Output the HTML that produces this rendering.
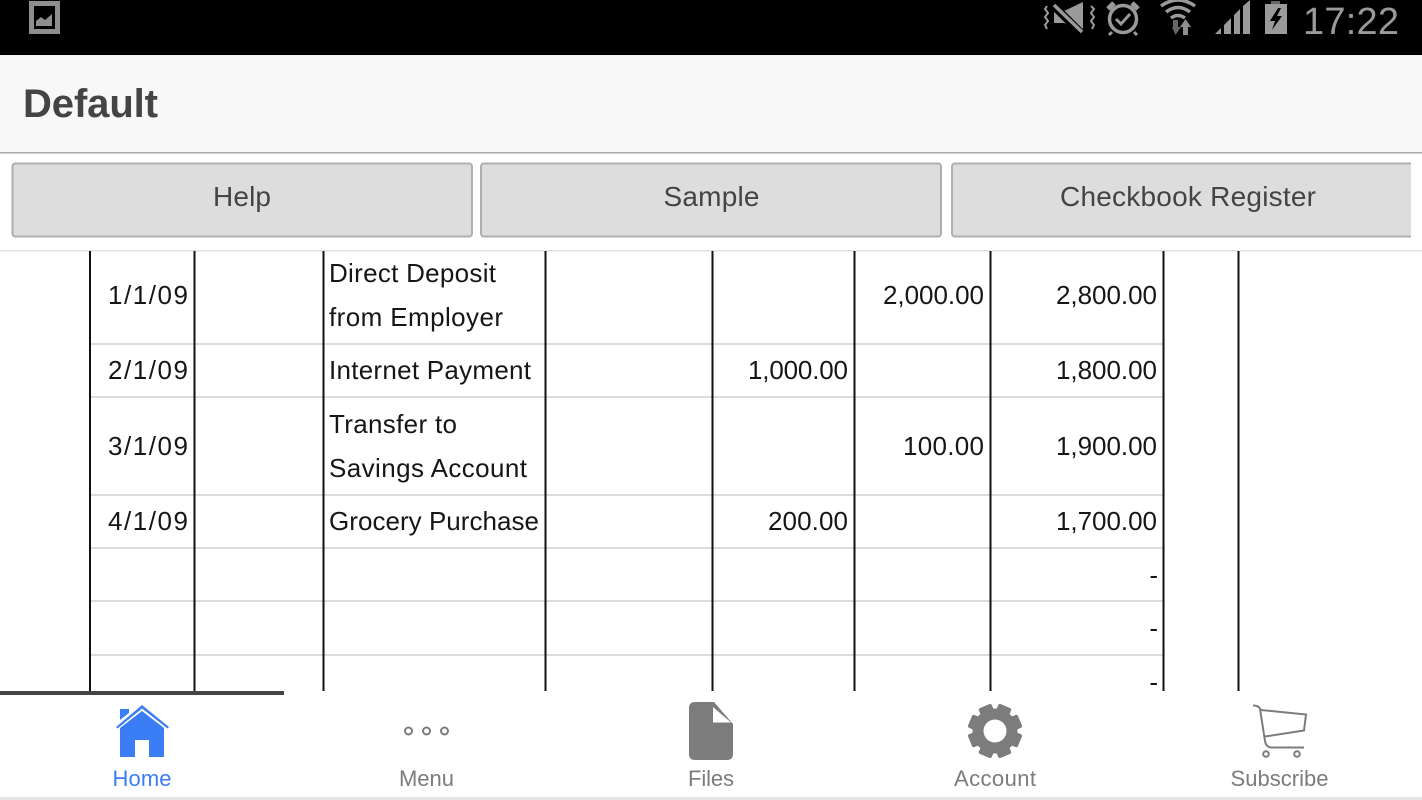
<!DOCTYPE html>
<html><head><meta charset="utf-8"><style>
html,body{margin:0;padding:0;background:#fff;width:1422px;height:800px;overflow:hidden}
svg{display:block;position:absolute;left:0;top:0}
text{font-family:"Liberation Sans",sans-serif}
.t{font-size:26px;fill:#161616}
.r{text-anchor:end}
.b{font-size:28px;fill:#444;text-anchor:middle}
.n{font-size:22px;fill:#7c7c7c;text-anchor:middle}
</style></head><body>
<svg width="1422" height="800" viewBox="0 0 1422 800" xmlns="http://www.w3.org/2000/svg">
<rect width="1422" height="800" fill="#fff"/>
<!-- status bar -->
<rect width="1422" height="55" fill="#000"/>
<g fill="#8e8e8e" stroke="none">
<path fill-rule="evenodd" d="M29 1H60V34H29ZM34 6V29H55V6Z"/>
<path d="M36 26V21L41 17L45 20L52 14V26Z"/>
</g>
<!-- mute + vibrate -->
<path d="M1054 11H1064L1083 2V31L1064 23H1054Z" fill="#9a9a9a"/>
<path d="M1053 5L1083 35" stroke="#000" stroke-width="8" fill="none"/>
<path d="M1054 5L1082 32" stroke="#9a9a9a" stroke-width="3.500" fill="none"/>
<g stroke="#9a9a9a" fill="none">
<path d="M1047 6L1045 9L1048 13L1045 17L1048 21L1045 25L1047 29" stroke-width="2"/>
<path d="M1091 6L1094 9L1091 13L1094 17L1091 21L1094 25L1092 29" stroke-width="2"/>
<circle cx="1123" cy="19" r="13.500" stroke-width="3.500"/>
<path d="M1116 19L1121 24L1130 14" stroke-width="3"/>
<path d="M1108 9L1114 3M1138 9L1132 3" stroke-width="5"/>
<path d="M1112 32L1109 35M1134 32L1137 35" stroke-width="3"/>
<path d="M1161 6Q1178 -6 1195 6M1166 12Q1178 3 1190 12M1171 18Q1178 13 1185 18" stroke-width="3.500"/>
</g>
<path d="M1172 27H1173V20H1178V27H1181L1175.500 35Z" fill="#666"/>
<path d="M1180 27L1185.500 19L1191 27H1188V35H1183V27Z" fill="#8e8e8e"/>
<g fill="#9a9a9a">
<path d="M1215 34L1221 28V34Z"/>
<path d="M1224 34V25L1231 18V34Z"/>
<path d="M1234 34V15L1240 9V34Z"/>
<path d="M1243 34V6L1250 0V34Z"/>
<rect x="1271" y="1" width="9" height="4" fill="#666"/>
<path fill-rule="evenodd" d="M1265 4H1287V34H1265ZM1278 8L1270 21H1275L1272 30L1282 16H1277L1281 8Z"/>
</g>
<text x="1303" y="34" font-size="38" fill="#9a9a9a" textLength="96" lengthAdjust="spacing">17:22</text>
<!-- header -->
<rect y="55" width="1422" height="97" fill="#f8f8f8"/>
<rect y="152" width="1422" height="1.500" fill="#aaa"/>
<text x="23" y="117" font-size="40" font-weight="bold" fill="#444" textLength="135" lengthAdjust="spacing">Default</text>
<!-- buttons -->
<g fill="#dddddd" stroke="#aeaeae" stroke-width="2">
<rect x="12.500" y="163.500" width="459.500" height="73" rx="3"/>
<rect x="481" y="163.500" width="460" height="73" rx="3"/>
<rect x="952" y="163.500" width="480" height="73" rx="3"/>
</g>
<rect x="1411" y="155" width="11" height="90" fill="#fff"/>
<text class="b" x="242" y="206" textLength="58">Help</text>
<text class="b" x="711.500" y="206" textLength="96">Sample</text>
<text class="b" x="1188" y="206" textLength="256">Checkbook Register</text>
<rect y="250" width="1422" height="1.500" fill="#e2e2e2"/>
<!-- table rules -->
<g fill="#dcdcdc">
<rect x="90" y="343" width="1073" height="2"/>
<rect x="90" y="396" width="1073" height="2"/>
<rect x="90" y="494" width="1073" height="2"/>
<rect x="90" y="547" width="1073" height="2"/>
<rect x="90" y="600" width="1073" height="2"/>
<rect x="90" y="654" width="1073" height="2"/>
</g>
<g fill="#111">
<rect x="89" y="251" width="2" height="440"/>
<rect x="193.500" y="251" width="2" height="440"/>
<rect x="322.500" y="251" width="2" height="440"/>
<rect x="544.500" y="251" width="2" height="440"/>
<rect x="711.500" y="251" width="2" height="440"/>
<rect x="853.500" y="251" width="2" height="440"/>
<rect x="989.500" y="251" width="2" height="440"/>
<rect x="1162.500" y="251" width="2" height="440"/>
<rect x="1237.500" y="251" width="2" height="440"/>
</g>
<!-- table text -->
<g class="t">
<text class="t r" x="188" y="304" textLength="80">1/1/09</text>
<text class="t" x="329" y="282" textLength="167">Direct Deposit</text>
<text class="t" x="329" y="326" textLength="174">from Employer</text>
<text class="t r" x="984" y="304" textLength="101">2,000.00</text>
<text class="t r" x="1157" y="304" textLength="101">2,800.00</text>
<text class="t r" x="188" y="379" textLength="80">2/1/09</text>
<text class="t" x="329" y="379" textLength="202">Internet Payment</text>
<text class="t r" x="848" y="379" textLength="100">1,000.00</text>
<text class="t r" x="1157" y="379" textLength="101">1,800.00</text>
<text class="t r" x="188" y="455" textLength="80">3/1/09</text>
<text class="t" x="329" y="433" textLength="128">Transfer to</text>
<text class="t" x="329" y="477" textLength="198">Savings Account</text>
<text class="t r" x="984" y="455" textLength="81">100.00</text>
<text class="t r" x="1157" y="455" textLength="101">1,900.00</text>
<text class="t r" x="188" y="530" textLength="80">4/1/09</text>
<text class="t" x="329" y="530" textLength="210">Grocery Purchase</text>
<text class="t r" x="848" y="530" textLength="80">200.00</text>
<text class="t r" x="1157" y="530" textLength="101">1,700.00</text>
<text class="t r" x="1158" y="584">-</text>
<text class="t r" x="1158" y="637">-</text>
<text class="t r" x="1158" y="691">-</text>
</g>
<!-- tab bar -->
<rect y="691" width="1422" height="109" fill="#fff"/>
<rect y="691" width="284" height="4" fill="#444"/>
<rect y="797" width="1422" height="3" fill="#e4e4e4"/>
<!-- Home -->
<g fill="#3b7df5">
<path d="M116 727L142 705L169 727L167.500 728.500L142 708.500L117.500 728.500Z"/>
<path d="M120 709H129V713L120 720Z"/>
<path fill-rule="evenodd" d="M120 728L142 711L164 728V757H149V740H135V757H120Z"/>
</g>
<text class="n" x="142" y="786" style="fill:#3b7df5" textLength="59">Home</text>
<!-- Menu -->
<g fill="none" stroke="#7c7c7c" stroke-width="2">
<circle cx="408.500" cy="731" r="3.500"/>
<circle cx="426.500" cy="731" r="3.500"/>
<circle cx="444.500" cy="731" r="3.500"/>
</g>
<text class="n" x="426.500" y="786" textLength="55">Menu</text>
<!-- Files -->
<path d="M695 702H714L733 724V754Q733 760 727 760H695Q689 760 689 754V708Q689 702 695 702Z" fill="#7c7c7c"/>
<path d="M713 707V722.500H731Z" fill="#fff"/>
<text class="n" x="711" y="786" textLength="46">Files</text>
<!-- Account gear: 8 teeth offset 22.5deg from vertical -->
<g fill="#7c7c7c">
<circle cx="995" cy="731" r="22.500"/>
<rect x="988" y="704" width="14" height="10" rx="2" transform="rotate(22.5 995 731)"/>
<rect x="988" y="704" width="14" height="10" rx="2" transform="rotate(67.5 995 731)"/>
<rect x="988" y="704" width="14" height="10" rx="2" transform="rotate(112.5 995 731)"/>
<rect x="988" y="704" width="14" height="10" rx="2" transform="rotate(157.5 995 731)"/>
<rect x="988" y="704" width="14" height="10" rx="2" transform="rotate(202.5 995 731)"/>
<rect x="988" y="704" width="14" height="10" rx="2" transform="rotate(247.5 995 731)"/>
<rect x="988" y="704" width="14" height="10" rx="2" transform="rotate(292.5 995 731)"/>
<rect x="988" y="704" width="14" height="10" rx="2" transform="rotate(337.5 995 731)"/>
</g>
<circle cx="995" cy="731" r="11.500" fill="#fff"/>
<text class="n" x="995" y="786" textLength="82">Account</text>
<!-- Subscribe -->
<g fill="none" stroke="#7c7c7c" stroke-width="2">
<path d="M1253 705.500Q1259 705.500 1260 709L1265 741Q1266 747.500 1272 747.500H1304"/>
<path d="M1261 710L1306 714.500L1304 730.500L1265 736.500"/>
<circle cx="1266" cy="754" r="2.800"/>
<circle cx="1297" cy="754" r="2.800"/>
</g>
<text class="n" x="1279.500" y="786" textLength="98">Subscribe</text>
</svg>
</body></html>
